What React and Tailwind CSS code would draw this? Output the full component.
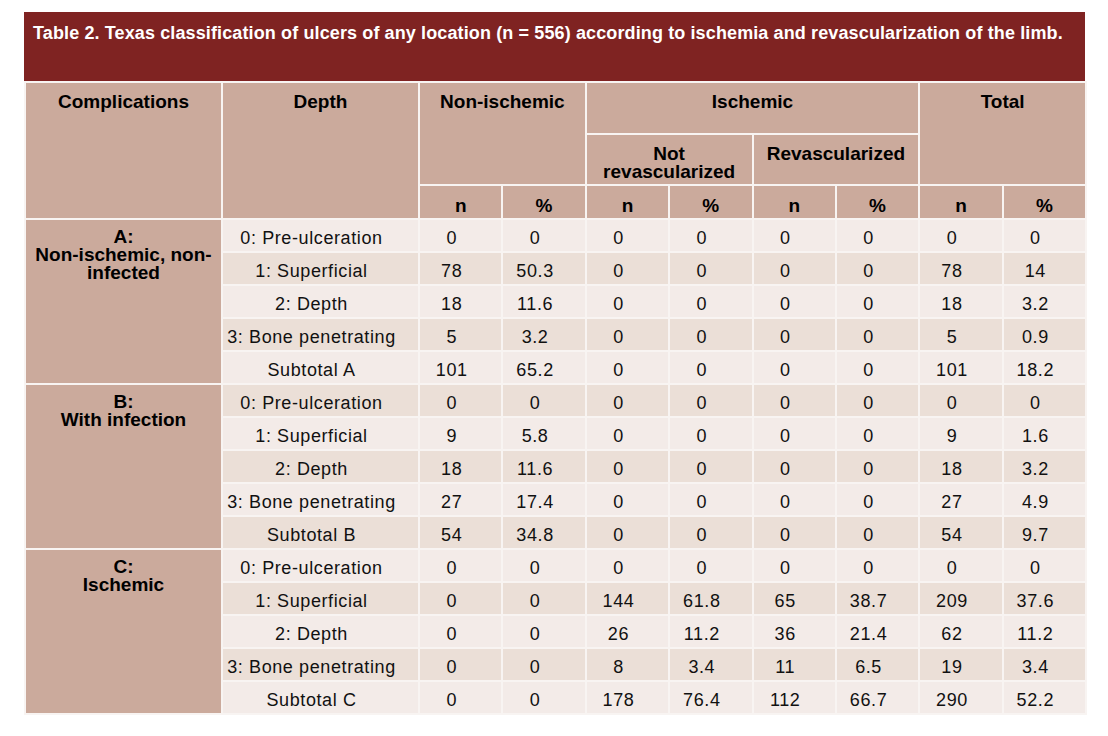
const groups = [
  {
    label: ["A:", "Non-ischemic, non-", "infected"],
    rows: [
      ["0: Pre-ulceration", "0", "0", "0", "0", "0", "0", "0", "0"],
      ["1: Superficial", "78", "50.3", "0", "0", "0", "0", "78", "14"],
      ["2: Depth", "18", "11.6", "0", "0", "0", "0", "18", "3.2"],
      ["3: Bone penetrating", "5", "3.2", "0", "0", "0", "0", "5", "0.9"],
      ["Subtotal A", "101", "65.2", "0", "0", "0", "0", "101", "18.2"],
    ],
  },
  {
    label: ["B:", "With infection"],
    rows: [
      ["0: Pre-ulceration", "0", "0", "0", "0", "0", "0", "0", "0"],
      ["1: Superficial", "9", "5.8", "0", "0", "0", "0", "9", "1.6"],
      ["2: Depth", "18", "11.6", "0", "0", "0", "0", "18", "3.2"],
      ["3: Bone penetrating", "27", "17.4", "0", "0", "0", "0", "27", "4.9"],
      ["Subtotal B", "54", "34.8", "0", "0", "0", "0", "54", "9.7"],
    ],
  },
  {
    label: ["C:", "Ischemic"],
    rows: [
      ["0: Pre-ulceration", "0", "0", "0", "0", "0", "0", "0", "0"],
      ["1: Superficial", "0", "0", "144", "61.8", "65", "38.7", "209", "37.6"],
      ["2: Depth", "0", "0", "26", "11.2", "36", "21.4", "62", "11.2"],
      ["3: Bone penetrating", "0", "0", "8", "3.4", "11", "6.5", "19", "3.4"],
      ["Subtotal C", "0", "0", "178", "76.4", "112", "66.7", "290", "52.2"],
    ],
  },
];

const th = "border-2 border-[#f8f4f2] bg-[#cbaa9c] font-bold text-[19px] leading-[17.5px] text-black text-center align-top";
const td = "border-2 border-[#f8f4f2] text-[18px] leading-[20px] tracking-[0.6px] text-[#111] text-center pr-5 pl-0.5 pt-[5px] pb-0 h-[33px] align-middle";

export default function App() {
  let idx = 0;
  return (
    <div className="bg-white min-h-screen pt-3 pl-6 font-['Liberation_Sans',Arial,sans-serif]">
      <div className="w-[1061px]">
        <div className="h-[69px] bg-[#7f2322] px-[9px] pt-[8px] text-white font-bold text-[18px] tracking-[0.12px] whitespace-nowrap">
          Table 2. Texas classification of ulcers of any location (n = 556) according to ischemia and revascularization of the limb.
        </div>
        <table className="w-[1061px] table-fixed border-collapse">
          <colgroup>
            <col className="w-[197px]" />
            <col className="w-[197px]" />
            {[0, 1, 2, 3, 4, 5, 6, 7].map((i) => (
              <col key={i} className="w-[83.375px]" />
            ))}
          </colgroup>
          <thead>
            <tr className="h-[52px]">
              <th rowSpan={3} className={`${th} pt-[10px]`}>Complications</th>
              <th rowSpan={3} className={`${th} pt-[10px]`}>Depth</th>
              <th rowSpan={2} colSpan={2} className={`${th} pt-[10px]`}>Non-ischemic</th>
              <th colSpan={4} className={`${th} pt-[10px]`}>Ischemic</th>
              <th rowSpan={2} colSpan={2} className={`${th} pt-[10px]`}>Total</th>
            </tr>
            <tr className="h-[51px]">
              <th colSpan={2} className={`${th} pt-[10px]`}>Not<br />revascularized</th>
              <th colSpan={2} className={`${th} pt-[10px]`}>Revascularized</th>
            </tr>
            <tr className="h-[34px]">
              {["n", "%", "n", "%", "n", "%", "n", "%"].map((t, i) => (
                <th key={i} className={`${th} pt-[11px]`}>{t}</th>
              ))}
            </tr>
          </thead>
          <tbody>
            {groups.map((g) =>
              g.rows.map((r, ri) => {
                const light = idx++ % 2 === 0;
                return (
                  <tr key={g.label[0] + ri} className={light ? "bg-[#f3ebe8]" : "bg-[#ebdfd7]"}>
                    {ri === 0 && (
                      <td rowSpan={5} className={`${th} text-[18px] leading-[18px] pt-[8px]`}>
                        {g.label.map((l) => (
                          <div key={l}>{l}</div>
                        ))}
                      </td>
                    )}
                    {r.map((c, ci) => (
                      <td key={ci} className={td}>{c}</td>
                    ))}
                  </tr>
                );
              })
            )}
          </tbody>
        </table>
      </div>
    </div>
  );
}
